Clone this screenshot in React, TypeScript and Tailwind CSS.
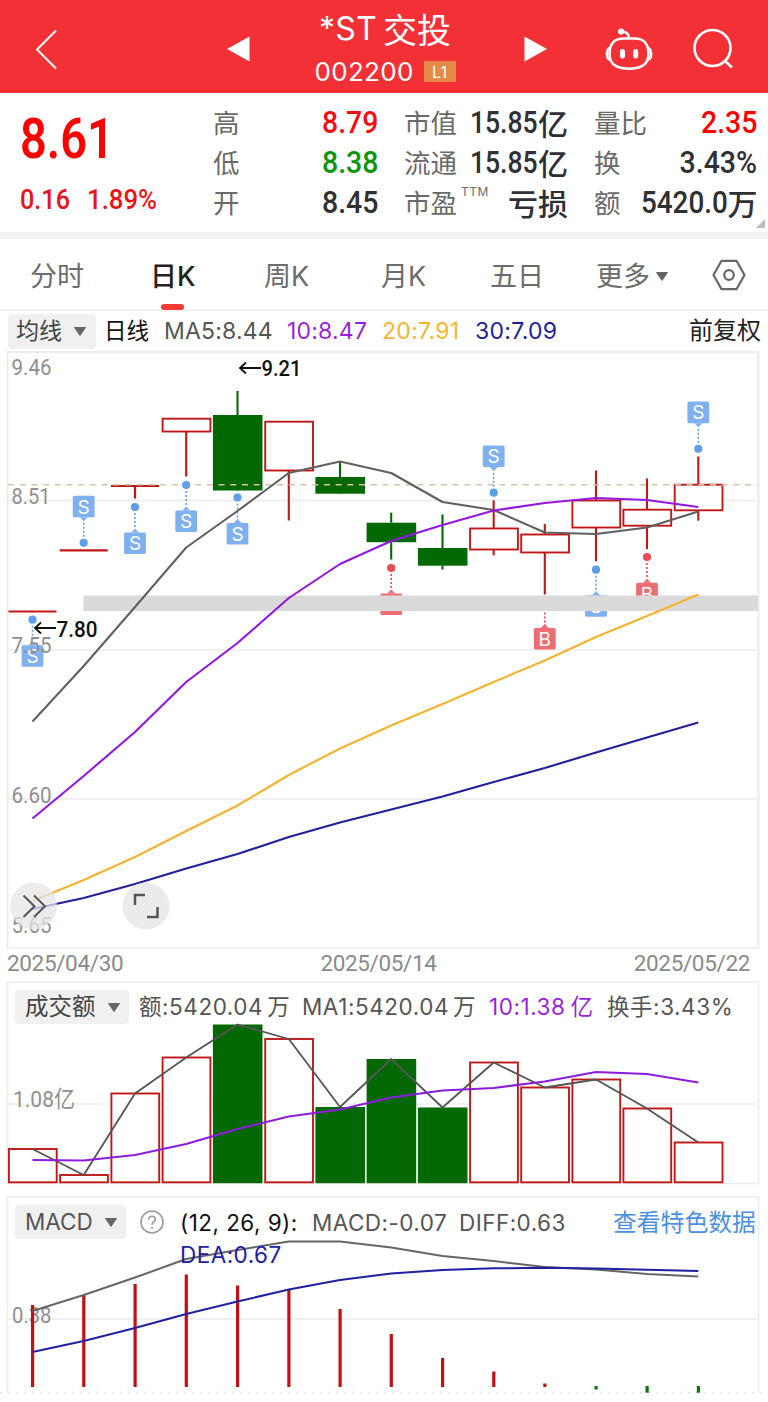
import React from "react";

const UI = "font-['Inter','Noto_Sans_CJK_SC',sans-serif]";
const CJK = "font-['Noto_Sans_CJK_SC',sans-serif]";
const DIN = "font-['Roboto','Noto_Sans_CJK_SC',sans-serif]";

const RED = "#c01818";
const GREEN = "#046804";
const XS = [32.5, 83.7, 135, 186.2, 237.5, 288.8, 340, 391.2, 442.5, 493.7, 544.8, 596, 647, 698.3];

const line = (ys: number[]) => ys.map((y, i) => `${XS[i]},${y}`).join(" ");

type Candle = { top: number; bottom: number; high: number; low: number; up: boolean };
const candles: Candle[] = [
  { top: 611.5, bottom: 611.5, high: 611.5, low: 611.5, up: true },
  { top: 550.3, bottom: 550.3, high: 550.3, low: 550.3, up: true },
  { top: 486, bottom: 486, high: 486, low: 498.5, up: true },
  { top: 418.7, bottom: 431.5, high: 418.7, low: 476.5, up: true },
  { top: 415, bottom: 490.5, high: 391, low: 490, up: false },
  { top: 421.7, bottom: 470.5, high: 421.7, low: 520.5, up: true },
  { top: 477, bottom: 493.7, high: 461, low: 493, up: false },
  { top: 522.7, bottom: 542.2, high: 512.7, low: 559.5, up: false },
  { top: 548, bottom: 565.7, high: 514.5, low: 569.5, up: false },
  { top: 528.5, bottom: 549.5, high: 500.3, low: 555.3, up: true },
  { top: 534.5, bottom: 552.5, high: 524, low: 594.5, up: true },
  { top: 500.5, bottom: 527.5, high: 470.5, low: 561.3, up: true },
  { top: 509.7, bottom: 525.7, high: 478.5, low: 549, up: true },
  { top: 484.7, bottom: 510.3, high: 456.5, low: 520.7, up: true },
];

const ma5 = [721.5, 666, 607, 547.5, 511, 473, 461.5, 473, 502, 510, 532.5, 534, 527.5, 511.5];
const ma10 = [818.5, 776, 732, 682, 643, 598, 564, 541, 525, 510.5, 503, 498, 500, 507];
const ma20 = [901, 880, 857, 831, 805.5, 775, 748.5, 725.5, 704, 682, 660.5, 637, 616, 594.5];
const ma30 = [909, 898, 884, 868.5, 854, 837, 822.5, 809.5, 796.5, 782, 768, 752.5, 737.5, 722.5];

type Mark = { i: number; dot: number; box: number; kind: "S" | "B" };
const marks: Mark[] = [
  { i: 0, dot: 619.7, box: 656, kind: "S" },
  { i: 1, dot: 542.8, box: 506.5, kind: "S" },
  { i: 2, dot: 507, box: 543.2, kind: "S" },
  { i: 3, dot: 485, box: 521.3, kind: "S" },
  { i: 4, dot: 497.5, box: 533.8, kind: "S" },
  { i: 7, dot: 568, box: 604.3, kind: "B" },
  { i: 9, dot: 492.7, box: 456.3, kind: "S" },
  { i: 10, dot: 602.5, box: 638.8, kind: "B" },
  { i: 11, dot: 569.7, box: 606, kind: "S" },
  { i: 12, dot: 557, box: 593.5, kind: "B" },
  { i: 13, dot: 448.8, box: 412.4, kind: "S" },
];

function Candlestick({ c, x }: { c: Candle; x: number }) {
  const color = c.up ? RED : GREEN;
  if (c.top === c.bottom) {
    return (
      <g stroke={color} strokeWidth="2.2">
        <line x1={x - 24} x2={x + 24} y1={c.top} y2={c.top} />
        {c.low > c.bottom && <line x1={x} x2={x} y1={c.top} y2={c.low} />}
      </g>
    );
  }
  return (
    <g stroke={color} strokeWidth="2.1">
      <line x1={x} x2={x} y1={c.high} y2={c.top} />
      <line x1={x} x2={x} y1={c.bottom} y2={c.low} />
      {c.up ? (
        <rect x={x - 23.6} y={c.top} width="47.8" height={c.bottom - c.top} fill="#fff" strokeWidth="1.9" />
      ) : (
        <rect x={x - 24.6} y={c.top} width="49.6" height={c.bottom - c.top} fill={GREEN} stroke="none" />
      )}
    </g>
  );
}

function Marker({ m }: { m: Mark }) {
  const x = XS[m.i];
  const dir = m.box > m.dot ? 1 : -1;
  const edge = m.box - dir * 10.8;
  const fill = m.kind === "S" ? "#7fb1f0" : "#ee6d72";
  const dot = m.kind === "S" ? "#5f9fea" : "#e84c50";
  return (
    <g>
      <circle cx={x} cy={m.dot} r="4.1" fill={dot} />
      <line x1={x} x2={x} y1={m.dot + dir * 6} y2={edge - dir * 3} stroke={dot} strokeWidth="1.6" strokeDasharray="2 2" />
      <rect x={x - 10.9} y={m.box - 10.8} width="21.8" height="21.6" rx="1.5" fill={fill} />
      <path d={`M${x - 4} ${edge} L${x} ${edge - dir * 4} L${x + 4} ${edge} Z`} fill={fill} />
      <text x={x} y={m.box + 7} textAnchor="middle" fontSize="19" fontFamily="Inter, sans-serif" fill="#fff">
        {m.kind}
      </text>
    </g>
  );
}

function Label({ x, y, w, children, fill = "#8f8f8f", size = 22.5, weight = 400 }: {
  x: number; y: number; w: number; children: string; fill?: string; size?: number; weight?: number;
}) {
  return (
    <text x={x} y={y} textLength={w} lengthAdjust="spacingAndGlyphs" fontSize={size} fontWeight={weight}
      fontFamily="Roboto, 'Noto Sans CJK SC', sans-serif" fill={fill}>
      {children}
    </text>
  );
}

function Caret({ className = "" }: { className?: string }) {
  return (
    <svg viewBox="0 0 12 9" className={`h-[9px] w-3 shrink-0 ${className}`}>
      <path d="M0.5 0.5h11L6 8.5z" fill="#666" stroke="#666" strokeLinejoin="round" />
    </svg>
  );
}

function Header() {
  return (
    <header className="flex h-[93px] items-center bg-[#f23036] text-white">
      <svg viewBox="0 0 24 42" className="ml-[35px] mt-[5px] h-[42px] w-6" fill="none" stroke="#fff" strokeWidth="2">
        <path d="M21 2.5L2 21.500L21 40.500" />
      </svg>
      <svg viewBox="0 0 24 26" className="ml-[167px] mt-[4px] h-[26px] w-6" fill="#fff">
        <path d="M1 13L23.500 0.500V25.500z" />
      </svg>
      <div className="ml-[58px] flex w-[154px] flex-col items-center pt-[8px]">
        <div className="flex h-[42px] items-center whitespace-nowrap pb-1 leading-none">
          <span className="font-['Inter',sans-serif] text-[32px] tracking-[0.2px]">*ST</span>
          <span className={`ml-[6px] text-[34px] ${CJK}`}>交投</span>
        </div>
        <div className="flex h-[40px] w-[141px] items-center">
          <span className="w-[101px] whitespace-nowrap font-['Inter',sans-serif] text-[26px] leading-none tracking-[0.3px]">002200</span>
          <span className="ml-[9px] flex h-[21px] w-8 shrink-0 items-center justify-center bg-[#e58a46] font-['Inter',sans-serif] text-[16px] leading-none">L1</span>
        </div>
      </div>
      <svg viewBox="0 0 24 26" className="ml-[62px] mt-[4px] h-[26px] w-6" fill="#fff">
        <path d="M0.500 0.500V25.500L23 13z" />
      </svg>
      <svg viewBox="0 0 48 44" className="ml-[57px] mt-[5px] h-[44px] w-12" fill="none" stroke="#fff" strokeWidth="2.6">
        <circle cx="16" cy="4.500" r="2.400" fill="#fff" strokeWidth="1.400" />
        <path d="M16.500 4.500Q23.500 4.500 24 11" />
        <path d="M18 11.500H30C39 11.500 43.500 17.500 43.500 26.500C43.500 36.500 38 41.700 24 41.700C10 41.700 4.500 36.500 4.500 26.500C4.500 17.500 9 11.500 18 11.500Z" />
        <path d="M5 20.500Q1.800 22 1.800 27Q1.800 32 5.500 33M43 20.500Q46.200 22 46.200 27Q46.200 32 42.500 33" strokeWidth="2.400" />
        <path d="M17.500 24.500v4.500M30.700 24.500v4.500" strokeWidth="5" strokeLinecap="round" />
      </svg>
      <svg viewBox="0 0 42 42" className="ml-[39px] mt-[5px] h-[42px] w-[42px]" fill="none" stroke="#fff" strokeWidth="2.6">
        <circle cx="20.500" cy="20" r="18" />
        <path d="M33 33L40 39.500" />
      </svg>
    </header>
  );
}

function Stat({ name, value, unit, sup, color = "text-[#2f3033]", fit = "scale-x-[0.89]" }: {
  name: string; value?: string; unit?: string; sup?: string; color?: string; fit?: string;
}) {
  return (
    <div className="flex h-10 items-center whitespace-nowrap leading-none">
      <span className={`-mt-px flex w-0 text-[26.500px] text-[#6a6a6a] ${CJK}`}>
        {name}
        {sup && <span className="-mt-[3px] ml-[4px] font-['Inter',sans-serif] text-[12px] tracking-[0.500px]">{sup}</span>}
      </span>
      <span className={`-mt-[3px] ml-auto flex items-center font-medium ${color}`}>
        {value && <span className={`inline-block origin-right font-['Roboto',sans-serif] text-[32px] ${fit}`}>{value}</span>}
        {unit && <span className={`text-[30px] ${CJK}`}>{unit}</span>}
      </span>
    </div>
  );
}

function Quote() {
  return (
    <section className="relative flex h-[139px] pt-[10px]">
      <div className="w-[213px] pl-5 leading-none text-[#ff0000]">
        <div className="mt-[9px] h-[56px] w-[90px] origin-left scale-x-[0.855] font-['Roboto',sans-serif] text-[55px] font-semibold">8.61</div>
        <div className="mt-[18px] flex whitespace-nowrap font-['Roboto',sans-serif] text-[28px] font-medium text-[#e8141a]">
          <span className="w-[67px]"><span className="inline-block origin-left scale-x-[0.9]">0.16</span></span>
          <span className="inline-block origin-left scale-x-[0.92]">1.89%</span>
        </div>
      </div>
      <div className="w-[165px]">
        <Stat name="高" value="8.79" color="text-[#f01014]" />
        <Stat name="低" value="8.38" color="text-[#0c960c]" />
        <Stat name="开" value="8.45" />
      </div>
      <div className="ml-[26px] w-[164px]">
        <Stat name="市值" value="15.85" unit="亿" fit="scale-x-[0.83]" />
        <Stat name="流通" value="15.85" unit="亿" fit="scale-x-[0.83]" />
        <Stat name="市盈" sup="TTM" unit="亏损" />
      </div>
      <div className="ml-[26px] w-[163.500px]">
        <Stat name="量比" value="2.35" color="text-[#ff0000]" />
        <Stat name="换" value="3.43%" />
        <Stat name="额" value="5420.0" unit="万" fit="scale-x-[0.87]" />
      </div>
      <svg viewBox="0 0 9 9" className="absolute bottom-[4px] right-[3px] h-[9px] w-[9px]">
        <path d="M9 0V9H0z" fill="#bdbdbd" />
      </svg>
    </section>
  );
}

function Tabs() {
  return (
    <nav className={`flex h-[72px] whitespace-nowrap border-b-2 border-[#f0f0f0] text-[27px] leading-[76px] text-[#6c6c6c] ${UI}`}>
      <span className="ml-[30px] w-[120px]">分时</span>
      <span className="relative w-[114px] font-medium text-[#222]">
        日K
        <i className="absolute left-[11px] top-[65px] h-[6px] w-[23px] rounded-sm bg-[#fa3a34]" />
      </span>
      <span className="w-[117px]">周K</span>
      <span className="w-[109px]">月K</span>
      <span className="w-[106px]">五日</span>
      <span className="flex h-[76px] w-[116px] items-center">更多<Caret className="-mt-[2px] ml-[6px]" /></span>
      <svg viewBox="0 0 34 32" className="mt-[20px] h-8 w-[34px]" fill="none" stroke="#666" strokeWidth="2.2">
        <path d="M9.500 1.800h15L32.500 16L24.500 30.200h-15L1.500 16z" strokeLinejoin="round" />
        <circle cx="17" cy="16" r="4.800" />
      </svg>
    </nav>
  );
}

function PriceLegend() {
  return (
    <div className={`flex h-[40px] items-center whitespace-nowrap pl-2 text-[23px] leading-none ${UI}`}>
      <span className="flex h-[35px] w-[88px] items-center rounded bg-[#f0f0f0] pl-2 text-[#444]">均线<Caret className="ml-3" /></span>
      <span className="ml-2 w-[60px] text-[22.500px] text-[#111]">日线</span>
      <span className="w-[123px] tracking-[0.200px] text-[#555]">MA5:8.44</span>
      <span className="w-[95px] tracking-[0.200px] text-[#9a1fe0]">10:8.47</span>
      <span className="w-[93px] tracking-[0.300px] text-[#f5b52e]">20:7.91</span>
      <span className="w-[214px] tracking-[0.300px] text-[#1e1e9c]">30:7.09</span>
      <span className="text-[24px] text-[#222]">前复权</span>
    </div>
  );
}

function PriceChart() {
  return (
    <svg viewBox="0 351 768 598" className="block h-[598px] w-[768px]">
      <g stroke="#ececec" strokeWidth="1.500" fill="none">
        <rect x="7.500" y="352" width="751" height="596.500" strokeWidth="2" />
        <path d="M8 500.500H758M8 650H758M8 799H758" />
      </g>
      {candles.map((c, i) => <Candlestick key={i} c={c} x={XS[i]} />)}
      <path d="M8 484.700H758" stroke="#d2c5a8" strokeWidth="1.500" strokeDasharray="6 5.700" />
      {marks.map((m) => <Marker key={m.i} m={m} />)}
      <Label x={11.5} y={374.500} w={40}>9.46</Label>
      <Label x={11.5} y={503.500} w={39}>8.51</Label>
      <Label x={11.5} y={653} w={40}>7.55</Label>
      <Label x={11.5} y={803} w={40}>6.60</Label>
      <Label x={11.5} y={933} w={40}>5.65</Label>
      <rect x="83.500" y="595.500" width="674.500" height="15.500" fill="#dadada" />
      <g fill="none" strokeWidth="2.1" strokeLinejoin="round">
        <polyline points={line(ma5)} stroke="#606060" />
        <polyline points={line(ma10)} stroke="#9416e0" />
        <polyline points={line(ma20)} stroke="#f3b32f" />
        <polyline points={line(ma30)} stroke="#20209a" />
      </g>
      <g fill="none" stroke="#111" strokeWidth="1.800">
        <path d="M261 368H240M246 362.500L240 368L246 373.500" />
        <path d="M56 628H35M41 622.500L35 628L41 633.500" />
      </g>
      <Label x={261.5} y={376} w={40} fill="#111" weight={500}>9.21</Label>
      <Label x={56.5} y={636.500} w={41} fill="#111" weight={500}>7.80</Label>
      <circle cx="33.500" cy="906" r="23.500" fill="#e6e6e6" fillOpacity="0.750" />
      <circle cx="146" cy="906" r="23.500" fill="#e9e9e9" fillOpacity="0.900" />
      <g fill="none" stroke="#555" strokeWidth="2">
        <path d="M23.500 895.500L34.500 906.300L23.500 917M34 895.500L45 906.300L34 917" />
        <path d="M145 895H135V905M147 917H157.500V907" strokeWidth="2.500" />
      </g>
    </svg>
  );
}

function Dates() {
  return (
    <div className={`flex h-[32px] justify-between pl-[7px] pr-[18px] pt-[2px] text-[22.500px] leading-[24px] tracking-[-0.350px] text-[#8a8a8a] ${DIN}`}>
      <span>2025/04/30</span>
      <span>2025/05/14</span>
      <span>2025/05/22</span>
    </div>
  );
}

const volumes = [1149, 1175, 1093.5, 1057.5, 1024.5, 1039, 1107, 1059, 1107.5, 1062.5, 1087.5, 1079.5, 1108.5, 1142.5];
const volumeMa = [1160, 1160.5, 1155, 1144, 1129, 1116.5, 1109.5, 1097.5, 1090.5, 1088, 1081.5, 1072, 1074, 1082.5];

function VolumePanel() {
  return (
    <section className="grid h-[215px]">
      <svg viewBox="0 981 768 215" className="col-start-1 row-start-1 h-[215px] w-[768px]">
        <g stroke="#ececec" strokeWidth="1.500" fill="none">
          <rect x="7.500" y="982" width="751" height="201.500" />
          <path d="M8 1104H758" />
        </g>
        {volumes.map((y, i) =>
          candles[i].up ? (
            <rect key={i} x={XS[i] - 23.6} y={y} width="47.800" height={1182.3 - y} fill="#fff" stroke={RED} strokeWidth="1.900" />
          ) : (
            <rect key={i} x={XS[i] - 24.6} y={y} width="49.600" height={1183.2 - y} fill={GREEN} />
          )
        )}
        <g fill="none" strokeLinejoin="round" strokeWidth="1.800">
          <polyline points={line(volumes)} stroke="#555" />
          <polyline points={line(volumeMa)} stroke="#8c1cdc" strokeWidth="2.1" />
        </g>
        <Label x={13} y={1107} w={62}>1.08亿</Label>
      </svg>
      <div className={`z-10 col-start-1 row-start-1 mt-[9px] flex h-[34px] items-center self-start whitespace-nowrap pl-[15px] text-[22.500px] leading-none tracking-[0.550px] text-[#555] ${UI}`}>
        <span className="flex h-[34px] w-[114px] items-center rounded bg-[#f0f0f0] pl-[10px] text-[23.500px] tracking-normal text-[#444]">成交额<Caret className="ml-3" /></span>
        <span className="ml-[10px] w-[163px]">额:5420.04<span className="ml-1">万</span></span>
        <span className="w-[187px]">MA1:5420.04<span className="ml-1">万</span></span>
        <span className="w-[118px] text-[#9a1fe0]">10:1.38<span className="ml-[5px]">亿</span></span>
        <span>换手:3.43%</span>
      </div>
    </section>
  );
}

const bars = [1305, 1295, 1284, 1274.5, 1285.5, 1289.5, 1309, 1334, 1358, 1371.5, 1383.5];
const greenBars = [1389.5, 1392.7, 1392.7];
const diff = [1311, 1295, 1277.5, 1259, 1250, 1241.5, 1241.5, 1247.5, 1256, 1261, 1267, 1269.5, 1274, 1276.5];
const dea = [1352, 1341, 1328, 1314, 1301.5, 1289.5, 1280, 1273.5, 1270, 1268.3, 1267.8, 1268.5, 1269.7, 1271];

function MacdPanel() {
  return (
    <section className="grid h-[206px]">
      <svg viewBox="0 1196 768 206" className="col-start-1 row-start-1 h-[206px] w-[768px]">
        <path d="M7.500 1393V1196.700H758.500V1393M8 1319H758" stroke="#ececec" strokeWidth="1.500" fill="none" />
        <path d="M0 1392.500H768" stroke="#dedede" strokeWidth="1.700" strokeDasharray="2 6" />
        <Label x={12} y={1323} w={39.5}>0.38</Label>
        {bars.map((y, i) => <rect key={i} x={XS[i] - 1.5} y={y} width="3.200" height={1387 - y} fill="#c01015" />)}
        {greenBars.map((y, i) => <rect key={i} x={XS[i + 11] - 1.5} y="1386" width="3.200" height={y - 1386} fill="#0c750c" />)}
        <g fill="none" strokeLinejoin="round" strokeWidth="2">
          <polyline points={line(diff)} stroke="#666" />
          <polyline points={line(dea)} stroke="#2020a0" />
        </g>
      </svg>
      <div className={`z-10 col-start-1 row-start-1 mt-[9px] flex items-start self-start whitespace-nowrap pl-[15px] text-[22.500px] leading-[36px] ${UI}`}>
        <span className="flex h-[34px] w-[111px] items-center rounded bg-[#f0f0f0] pl-[10px] text-[22.500px] text-[#555]">MACD<Caret className="ml-3" /></span>
        <svg viewBox="0 0 24 24" className="ml-[14px] mt-[5px] h-6 w-6" fill="none" stroke="#999" strokeWidth="1.600">
          <circle cx="12" cy="12" r="11" />
          <path d="M8.700 9.500Q8.800 6.300 12 6.300Q15.300 6.300 15.300 9.300Q15.300 11 13.500 12Q12 13 12 15M12 17v2" />
        </svg>
        <div className="ml-[16px] w-[433px] tracking-[0.450px]">
          <div className="flex text-[#555]">
            <span className="w-[132px] text-[#111]">(12, 26, 9):</span>
            <span className="w-[147px]">MACD:-0.07</span>
            <span>DIFF:0.63</span>
          </div>
          <div className="-mt-[4px] text-[#2020a0]">DEA:0.67</div>
        </div>
        <span className="text-[23.800px] text-[#4a90e2]">查看特色数据</span>
      </div>
    </section>
  );
}

export default function App() {
  return (
    <main className="h-[1402px] w-[768px] overflow-hidden bg-white">
      <Header />
      <Quote />
      <div className="h-[7px] bg-[#f3f3f3]" />
      <Tabs />
      <PriceLegend />
      <PriceChart />
      <Dates />
      <VolumePanel />
      <MacdPanel />
    </main>
  );
}
